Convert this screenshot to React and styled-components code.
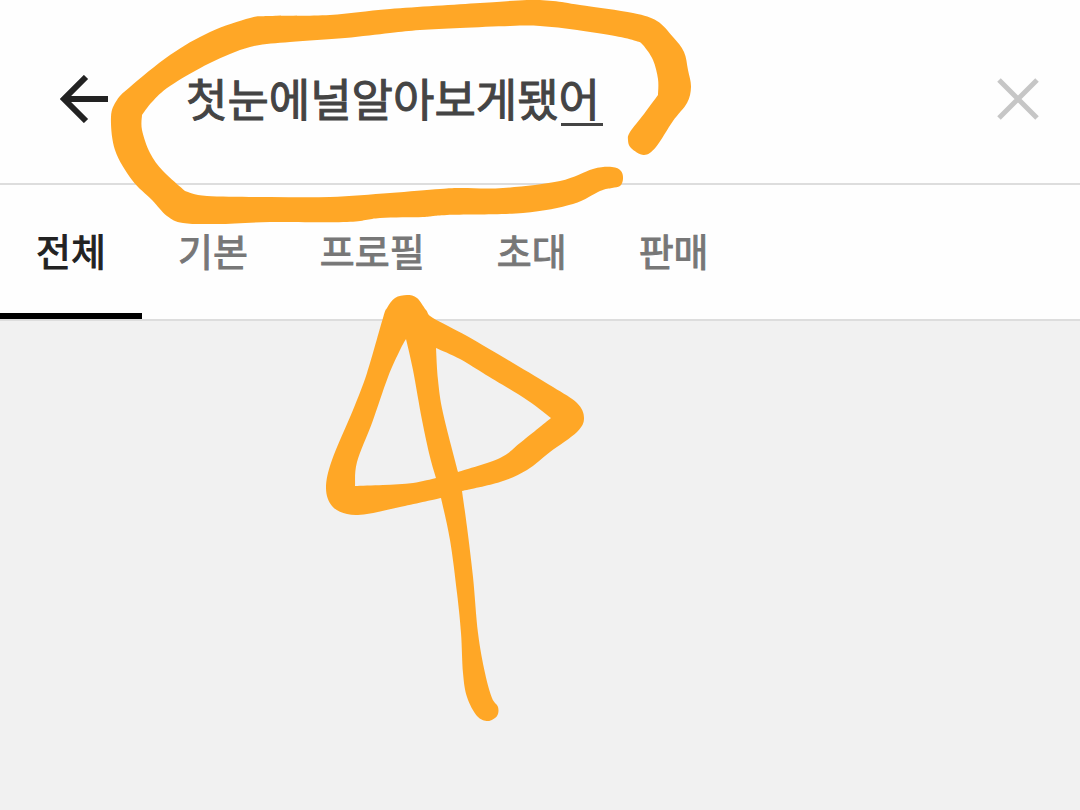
import React, { useState } from "react";
import styled, { createGlobalStyle } from "styled-components";

const tabs = ["전체", "기본", "프로필", "초대", "판매"];

// a point given twice in a row makes a sharp corner
const circle = [
  [630, 132], [644, 114], [658, 95], [658, 95], [658, 79], [653, 60],
  [643, 45], [636, 41], [615, 36], [577, 30], [540, 26], [510, 26],
  [460, 28], [420, 30], [390, 33], [345, 38], [290, 42], [250, 47],
  [210, 63], [170, 86], [152, 102], [142, 115], [142, 115], [142, 130],
  [150, 153], [163, 171], [185, 191], [185, 191], [207, 196], [270, 197],
  [330, 197], [390, 193], [440, 189], [460, 188], [503, 188], [560, 181],
  [593, 169], [612, 167], [621, 171], [623, 179], [620, 186], [612, 188],
  [600, 191], [573, 204], [523, 213], [447, 215], [423, 217], [380, 218],
  [347, 222], [270, 222], [217, 224], [183, 223], [167, 216], [152, 200],
  [132, 180], [115, 150], [111, 117], [117, 100], [130, 87], [170, 55],
  [210, 32], [250, 18], [270, 16], [330, 15], [390, 9], [480, 3],
  [527, 0], [553, 1], [580, 5], [633, 13], [657, 21], [673, 37],
  [684, 52], [688, 70], [691, 87], [687, 103], [673, 121], [656, 147],
  [644, 155], [631, 148], [628, 140],
];

const arrow = [
  [387, 308], [395, 298], [407, 295], [417, 298], [426, 310], [433, 318],
  [467, 336], [513, 363], [553, 387], [577, 403], [584, 418], [577, 432],
  [550, 452], [527, 470], [500, 482], [462, 491], [462, 491], [467, 527],
  [473, 577], [478, 633], [485, 673], [492, 698], [498, 707], [497, 716],
  [488, 721], [477, 716], [467, 697], [463, 673], [461, 633], [457, 593],
  [450, 540], [441, 498], [441, 498], [400, 507], [367, 514], [347, 514],
  [332, 506], [326, 488], [332, 460], [353, 410], [367, 373], [383, 318],
];

const arrowLeftGap = [
  [406, 339], [406, 339], [413, 370], [422, 420], [430, 457], [436, 478],
  [436, 478], [413, 483], [383, 485], [355, 486], [355, 486], [357, 462],
  [372, 423], [388, 377], [400, 350],
];

const arrowRightGap = [
  [436, 348], [436, 348], [438, 380], [443, 413], [458, 472], [458, 472],
  [500, 458], [520, 443], [551, 418], [551, 418], [527, 400], [483, 373],
  [460, 359],
];

const same = (a, b) => a[0] === b[0] && a[1] === b[1];

const toPath = (points) => {
  const n = points.length;
  const at = (i) => points[(i + n) % n];
  const curves = points.map((p, i) => {
    const before = at(i - 1);
    const next = at(i + 1);
    const after = at(i + 2);
    if (same(p, next)) {
      return "";
    }
    const c1 = [p[0] + (next[0] - before[0]) / 6, p[1] + (next[1] - before[1]) / 6];
    const c2 = [next[0] - (after[0] - p[0]) / 6, next[1] - (after[1] - p[1]) / 6];
    return `C${c1} ${c2} ${next}`;
  });
  return `M${points[0]}${curves.join("")}Z`;
};

const App = () => {
  const [query, setQuery] = useState("첫눈에널알아보게됐어");
  const [active, setActive] = useState("전체");

  return (
    <Page>
      <GlobalStyle />
      <Header>
        <IconButton type="button" aria-label="뒤로">
          <svg width="48" height="48" viewBox="0 0 48 48" fill="none">
            <path d="M26 2L4 24L26 46M4 24H48" stroke="#222" strokeWidth="6" />
          </svg>
        </IconButton>
        <SearchField>
          <SearchInput
            type="text"
            aria-label="검색"
            spellCheck={false}
            value={query}
            onChange={(e) => setQuery(e.target.value)}
          />
          <ComposingLine />
        </SearchField>
        <IconButton type="button" aria-label="지우기" onClick={() => setQuery("")}>
          <svg width="44" height="44" viewBox="0 0 44 44" fill="none">
            <path d="M3 3L41 41M41 3L3 41" stroke="#c6c6c6" strokeWidth="5" />
          </svg>
        </IconButton>
      </Header>
      <Tabs>
        {tabs.map((tab) => (
          <Tab
            key={tab}
            type="button"
            $active={tab === active}
            onClick={() => setActive(tab)}
          >
            {tab}
          </Tab>
        ))}
      </Tabs>
      <Marker width="1080" height="810" viewBox="0 0 1080 810" aria-hidden="true">
        <path d={toPath(circle)} />
        <path
          fillRule="evenodd"
          d={toPath(arrow) + toPath(arrowLeftGap) + toPath(arrowRightGap)}
        />
      </Marker>
    </Page>
  );
};

const GlobalStyle = createGlobalStyle`
  * {
    box-sizing: border-box;
  }
  body {
    margin: 0;
    background: #f1f1f1;
    font-family: "Noto Sans CJK KR", sans-serif;
  }
`;

const Page = styled.div`
  position: relative;
  min-height: 100vh;
  overflow: hidden;
`;

const Header = styled.header`
  display: flex;
  align-items: center;
  padding: 67px 40px 52px 60px;
  background: #fefefe;
  border-bottom: 2px solid #ddd;
`;

const IconButton = styled.button`
  display: flex;
  flex: none;
  padding: 0;
  border: none;
  background: none;
  cursor: pointer;
`;

const SearchField = styled.div`
  position: relative;
  flex: 1;
  min-width: 0;
  margin: 0 40px 0 78px;
`;

const SearchInput = styled.input`
  display: block;
  width: 100%;
  height: 64px;
  padding: 0 0 4px;
  border: none;
  outline: none;
  background: none;
  color: #444;
  font-family: inherit;
  font-size: 45px;
  line-height: 60px;
  -webkit-text-stroke: 1px #444;
`;

/* underline of the syllable that is still being typed */
const ComposingLine = styled.span`
  position: absolute;
  left: 375px;
  bottom: 5px;
  width: 42px;
  height: 3px;
  background: #444;
`;

const Tabs = styled.nav`
  display: flex;
  background: #fefefe;
  border-bottom: 2px solid #ddd;
`;

const Tab = styled.button`
  height: 134px;
  padding: 0 36px;
  border: none;
  border-bottom: 6px solid ${(props) => (props.$active ? "#000" : "transparent")};
  background: none;
  color: ${(props) => (props.$active ? "#222" : "#777")};
  font-family: inherit;
  font-size: 38px;
  font-weight: 400;
  -webkit-text-stroke: 1px ${(props) => (props.$active ? "#222" : "#777")};
  white-space: nowrap;
  cursor: pointer;
`;

const Marker = styled.svg`
  position: absolute;
  top: 0;
  left: 0;
  fill: #ffa726;
  pointer-events: none;
`;

export default App;
